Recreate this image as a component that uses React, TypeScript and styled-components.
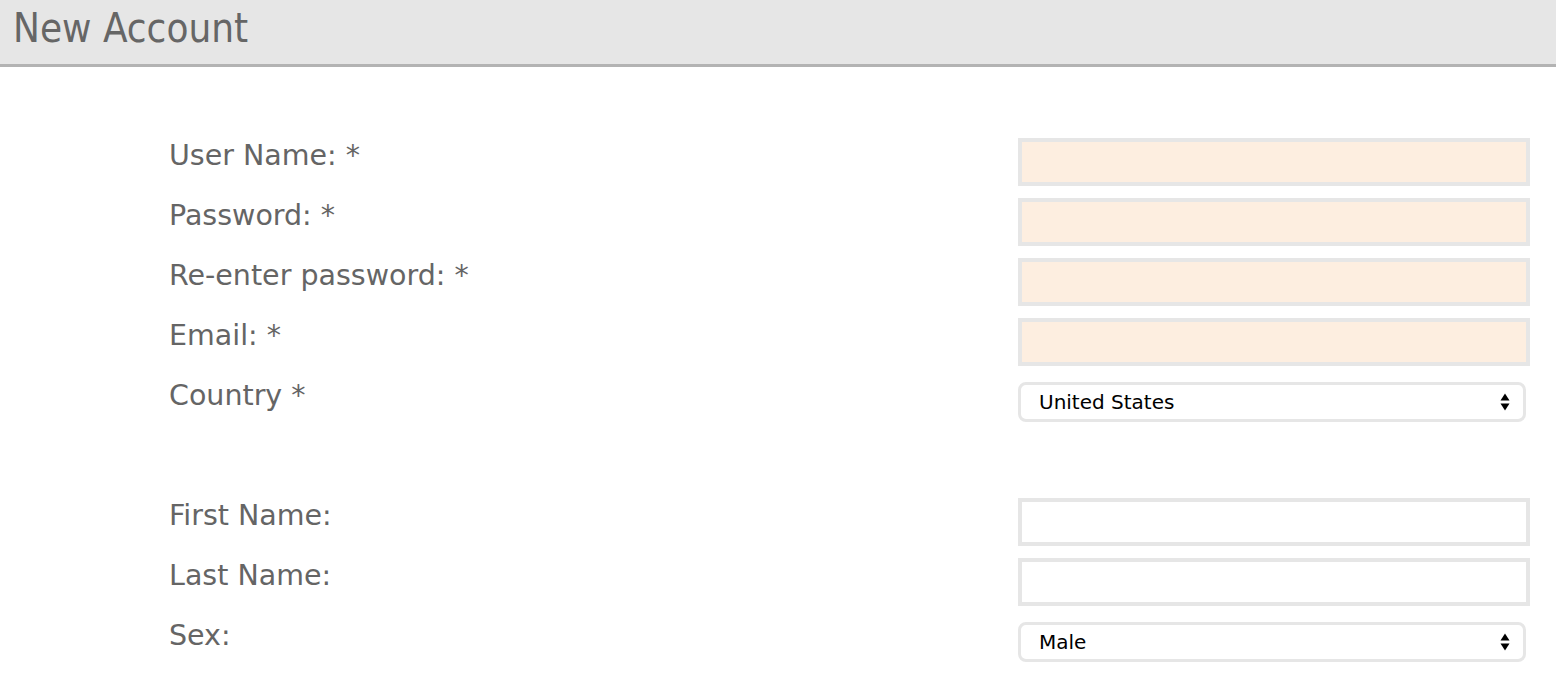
import React from 'react';
import styled, { createGlobalStyle } from 'styled-components';

const GlobalStyle = createGlobalStyle`
  html, body {
    margin: 0;
    padding: 0;
    background: #ffffff;
  }
  body {
    font-family: "DejaVu Sans", sans-serif;
    overflow: hidden;
  }
`;

const Header = styled.header`
  height: 64px;
  background: #e6e6e6;
  border-bottom: 3px solid #b3b3b3;
  padding-left: 13px;
`;

const Title = styled.h1`
  margin: 0;
  font-family: "DejaVu Sans Condensed", "DejaVu Sans", sans-serif;
  font-weight: normal;
  font-size: 40px;
  line-height: 56px;
  color: #666666;
`;

const Form = styled.form`
  display: grid;
  grid-template-columns: 1fr 512px;
  row-gap: 12px;
  margin-top: 71px;
  padding: 0 26px 0 169px;
`;

const Label = styled.label`
  font-family: "DejaVu Sans", sans-serif;
  font-size: 28.5px;
  line-height: 36px;
  color: #656565;
  align-self: start;
`;

const Field = styled.div`
  height: 48px;
  display: flex;
  align-items: center;
`;

const Spacer = styled.div`
  grid-column: 1 / -1;
  height: 48px;
`;

const TextInput = styled.input<{ $required?: boolean }>`
  box-sizing: border-box;
  width: 512px;
  height: 48px;
  margin: 0;
  border: 4px solid #e6e6e6;
  border-radius: 0;
  background: ${({ $required }) => ($required ? '#fdeee0' : '#ffffff')};
  outline: none;
`;

const SelectWrap = styled.div`
  position: relative;
  width: 508px;
  height: 40px;
`;

const Select = styled.select`
  box-sizing: border-box;
  width: 100%;
  height: 40px;
  margin: 0;
  padding: 0 0 0 18px;
  appearance: none;
  -webkit-appearance: none;
  border: 3px solid #e6e6e6;
  border-radius: 8px;
  background: #ffffff;
  font-family: "DejaVu Sans", sans-serif;
  font-size: 20px;
  color: #000000;
  outline: none;
`;

const Arrows = styled.svg`
  position: absolute;
  right: 16px;
  top: 11px;
  pointer-events: none;
`;

const SelectBox: React.FC<{ value: string; options: string[] }> = ({ value, options }) => (
  <SelectWrap>
    <Select defaultValue={value}>
      {options.map((o) => (
        <option key={o}>{o}</option>
      ))}
    </Select>
    <Arrows width="10" height="18" viewBox="0 0 10 18">
      <path d="M5 0.5 L9.5 7.5 L0.5 7.5 Z" fill="#000" />
      <path d="M5 17.5 L9.5 10.5 L0.5 10.5 Z" fill="#000" />
    </Arrows>
  </SelectWrap>
);

const App: React.FC = () => {
  return (
    <>
      <GlobalStyle />
      <Header>
        <Title>New Account</Title>
      </Header>
      <Form onSubmit={(e) => e.preventDefault()}>
        <Label>User Name: *</Label>
        <Field>
          <TextInput type="text" $required />
        </Field>
        <Label>Password: *</Label>
        <Field>
          <TextInput type="password" $required />
        </Field>
        <Label>Re-enter password: *</Label>
        <Field>
          <TextInput type="password" $required />
        </Field>
        <Label>Email: *</Label>
        <Field>
          <TextInput type="email" $required />
        </Field>
        <Label>Country *</Label>
        <Field>
          <SelectBox value="United States" options={['United States', 'Canada', 'Mexico']} />
        </Field>
        <Spacer />
        <Label>First Name:</Label>
        <Field>
          <TextInput type="text" />
        </Field>
        <Label>Last Name:</Label>
        <Field>
          <TextInput type="text" />
        </Field>
        <Label>Sex:</Label>
        <Field>
          <SelectBox value="Male" options={['Male', 'Female']} />
        </Field>
      </Form>
    </>
  );
};

export default App;
